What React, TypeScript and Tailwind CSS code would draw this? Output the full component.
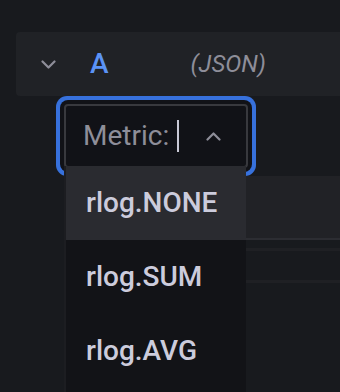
import React from 'react';

const options = ['rlog.NONE', 'rlog.SUM', 'rlog.AVG'];

function Chevron({ up = false, className = '' }: { up?: boolean; className?: string }) {
  return (
    <svg width="15" height="9" viewBox="0 0 15 9" fill="none" className={className}>
      <path
        d={up ? 'M1.5 7.5 L7.5 1.5 L13.5 7.5' : 'M1.5 1.5 L7.5 7.5 L13.5 1.5'}
        stroke="currentColor"
        strokeWidth="2.2"
        strokeLinecap="round"
        strokeLinejoin="round"
      />
    </svg>
  );
}

export default function App() {
  return (
    <div className="relative w-[340px] h-[392px] overflow-hidden bg-[#181a1e] font-['Roboto',sans-serif]">
      {/* Query row header */}
      <div className="pt-8 pl-4">
        <div className="h-16 flex items-center bg-[#202226] rounded-l-[4px]">
          <div className="w-16 flex justify-center text-[#8e8e99]">
            <Chevron />
          </div>
          <span className="ml-[10px] text-[28px] leading-none font-medium text-[#5b93f5]">A</span>
          <span className="ml-[82px] text-[24px] leading-none italic text-[#8e8e99]">(JSON)</span>
        </div>
      </div>

      {/* Select input, focused */}
      <div className="pl-16 pt-2">
        <div className="w-[184px] h-16 flex items-center pl-[17px] bg-[#111217] border-2 border-[#38393e] rounded-[4px] shadow-[0_0_0_4px_#111217,0_0_0_8px_#3771dc]">
          <span className="text-[28px] leading-none text-[#8e8e99]">Metric:</span>
          <span className="ml-[8px] w-[2px] h-8 bg-[#c9c9d6]" />
          <Chevron up className="ml-auto mr-[25px] text-[#8e8e99]" />
        </div>
      </div>

      {/* Next row, behind the menu */}
      <div className="mt-2 ml-[66px]">
        <div className="h-16 bg-[#212226] border-b-2 border-[#2c2d32]" />
        <div className="mt-2 h-[3px] bg-[#1f2024]" />
        <div className="mt-[29px] h-[3px] bg-[#1f2024]" />
      </div>

      {/* Options menu */}
      <div className="absolute left-16 top-[166px] w-[182px] h-[240px] bg-[#121317] border-l-2 border-[#1c1d21]">
        {options.map((o, i) => (
          <div
            key={o}
            className={`h-[74px] flex items-center pl-[20px] text-[28px] leading-none font-medium text-[#ccccdc] ${
              i === 0 ? 'bg-[#2a2b30]' : ''
            }`}
          >
            {o}
          </div>
        ))}
      </div>
    </div>
  );
}
